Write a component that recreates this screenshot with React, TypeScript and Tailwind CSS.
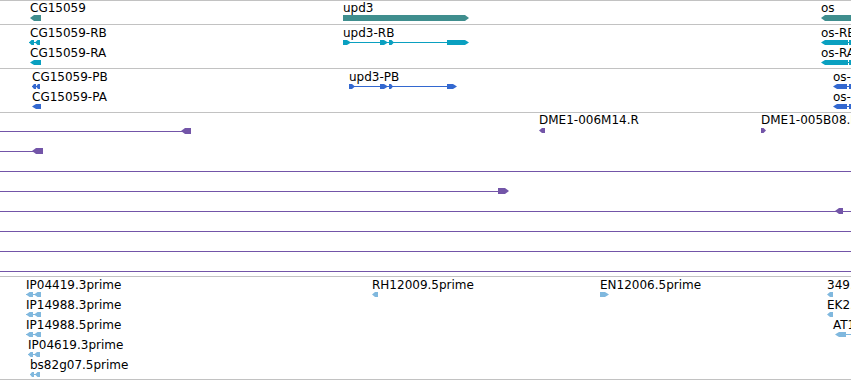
type Dir = 'L' | 'R';

// exon block with a pointed end showing strand
function Exon({ x1, x2, y, h, dir }: { x1: number; x2: number; y: number; h: number; dir?: Dir }) {
  const t = Math.min(4, (x2 - x1) / 2);
  const m = y + h / 2;
  let pts = `${x1},${y} ${x2},${y} ${x2},${y + h} ${x1},${y + h}`;
  if (dir === 'L') pts = `${x1},${m} ${x1 + t},${y} ${x2},${y} ${x2},${y + h} ${x1 + t},${y + h}`;
  if (dir === 'R') pts = `${x1},${y} ${x2 - t},${y} ${x2},${m} ${x2 - t},${y + h} ${x1},${y + h}`;
  return <polygon points={pts} />;
}

function Intron({ x1, x2, y }: { x1: number; x2: number; y: number }) {
  return <rect x={x1} y={y} width={x2 - x1} height={1} shapeRendering="crispEdges" />;
}

function Label({ text, pos }: { text: string; pos: string }) {
  return <span className={`absolute whitespace-nowrap ${pos}`}>{text}</span>;
}

function Track({
  className,
  top,
  height,
  fill,
  labels,
  children,
}: {
  className: string;
  top: number;
  height: number;
  fill: string;
  labels: { text: string; pos: string }[];
  children: React.ReactNode;
}) {
  return (
    <div className={`relative w-full overflow-hidden border-b border-[#c2c2c2] ${className}`}>
      <svg
        className="absolute left-0 top-0"
        width={851}
        height={height}
        viewBox={`0 ${top} 851 ${height}`}
        fill={fill}
      >
        {children}
      </svg>
      {labels.map((l) => (
        <Label key={l.text + l.pos} text={l.text} pos={l.pos} />
      ))}
    </div>
  );
}

const geneLabels = [
  { text: 'CG15059', pos: 'left-[30px] top-0' },
  { text: 'upd3', pos: 'left-[343px] top-0' },
  { text: 'os', pos: 'left-[821px] top-0' },
];

const transcriptLabels = [
  { text: 'CG15059-RB', pos: 'left-[30px] top-[1px]' },
  { text: 'CG15059-RA', pos: 'left-[30px] top-[21px]' },
  { text: 'upd3-RB', pos: 'left-[343px] top-[1px]' },
  { text: 'os-RB', pos: 'left-[821px] top-[1px]' },
  { text: 'os-RA', pos: 'left-[821px] top-[21px]' },
];

const proteinLabels = [
  { text: 'CG15059-PB', pos: 'left-[32px] top-[1px]' },
  { text: 'CG15059-PA', pos: 'left-[32px] top-[21px]' },
  { text: 'upd3-PB', pos: 'left-[349px] top-[1px]' },
  { text: 'os-PB', pos: 'left-[833px] top-[1px]' },
  { text: 'os-PA', pos: 'left-[833px] top-[21px]' },
];

const cloneLabels = [
  { text: 'DME1-006M14.R', pos: 'left-[539px] top-0' },
  { text: 'DME1-005B08.F', pos: 'left-[761px] top-0' },
];

const estLabels = [
  { text: 'IP04419.3prime', pos: 'left-[26px] top-[1px]' },
  { text: 'IP14988.3prime', pos: 'left-[26px] top-[21px]' },
  { text: 'IP14988.5prime', pos: 'left-[26px] top-[41px]' },
  { text: 'IP04619.3prime', pos: 'left-[28px] top-[61px]' },
  { text: 'bs82g07.5prime', pos: 'left-[30px] top-[81px]' },
  { text: 'RH12009.5prime', pos: 'left-[372px] top-[1px]' },
  { text: 'EN12006.5prime', pos: 'left-[600px] top-[1px]' },
  { text: '349.5prime', pos: 'left-[827px] top-[1px]' },
  { text: 'EK2.3prime', pos: 'left-[827px] top-[21px]' },
  { text: 'AT12.5prime', pos: 'left-[833px] top-[41px]' },
];

const fullLines = [171, 231, 251, 271];

export default function App() {
  return (
    <div className="w-[851px] h-[381px] overflow-hidden bg-white border-t border-[#c2c2c2] font-['DejaVu_Sans',sans-serif] text-[12px] leading-[14px] text-black">
      <Track className="h-[24px]" top={1} height={23} fill="#3f8e8e" labels={geneLabels}>
        <Exon x1={30} x2={41} y={15} h={6} dir="L" />
        <Exon x1={343} x2={469} y={15} h={6} dir="R" />
        <Exon x1={821} x2={860} y={15} h={6} dir="L" />
      </Track>

      <Track className="h-[44px]" top={25} height={43} fill="#0aa0c0" labels={transcriptLabels}>
        <Intron x1={29} x2={40} y={42} />
        <Exon x1={29} x2={34} y={40} h={5} dir="L" />
        <Exon x1={35} x2={40} y={40} h={5} dir="L" />
        <Exon x1={30} x2={41} y={60} h={5} dir="L" />
        <Intron x1={343} x2={468} y={42} />
        <Exon x1={343} x2={351} y={40} h={5} dir="R" />
        <Exon x1={380} x2={388} y={40} h={5} dir="R" />
        <Exon x1={389} x2={394} y={40} h={5} dir="R" />
        <Exon x1={447} x2={469} y={40} h={5} dir="R" />
        <Exon x1={821} x2={848} y={40} h={5} dir="L" />
        <Intron x1={848} x2={851} y={42} />
        <Exon x1={849} x2={860} y={40} h={5} />
        <Exon x1={821} x2={848} y={60} h={5} dir="L" />
        <Intron x1={848} x2={851} y={62} />
        <Exon x1={849} x2={860} y={60} h={5} />
      </Track>

      <Track className="h-[44px]" top={69} height={43} fill="#3368d0" labels={proteinLabels}>
        <Intron x1={32} x2={40} y={86} />
        <Exon x1={32} x2={36} y={84} h={5} dir="L" />
        <Exon x1={36} x2={40} y={84} h={5} dir="L" />
        <Exon x1={32} x2={41} y={104} h={5} dir="L" />
        <Intron x1={349} x2={456} y={86} />
        <Exon x1={349} x2={355} y={84} h={5} dir="R" />
        <Exon x1={380} x2={388} y={84} h={5} dir="R" />
        <Exon x1={389} x2={393} y={84} h={5} dir="R" />
        <Exon x1={447} x2={457} y={84} h={5} dir="R" />
        <Exon x1={833} x2={847} y={84} h={5} dir="L" />
        <Intron x1={847} x2={851} y={86} />
        <Exon x1={849} x2={860} y={84} h={5} />
        <Exon x1={833} x2={847} y={104} h={5} dir="L" />
        <Intron x1={847} x2={851} y={106} />
        <Exon x1={849} x2={860} y={104} h={5} />
      </Track>

      <Track className="h-[164px]" top={113} height={163} fill="#7355a8" labels={cloneLabels}>
        <Intron x1={0} x2={183} y={131} />
        <Exon x1={181} x2={191} y={128} h={6} dir="L" />
        <Exon x1={539} x2={545} y={128} h={5} dir="L" />
        <Exon x1={761} x2={766} y={128} h={5} dir="R" />
        <Intron x1={0} x2={34} y={151} />
        <Exon x1={32} x2={43} y={148} h={6} dir="L" />
        <Intron x1={0} x2={500} y={191} />
        <Exon x1={498} x2={509} y={188} h={6} dir="R" />
        <Intron x1={0} x2={851} y={211} />
        <Exon x1={835} x2={843} y={208} h={6} dir="L" />
        {fullLines.map((y) => (
          <Intron key={y} x1={0} x2={851} y={y} />
        ))}
      </Track>

      <Track className="h-[103px]" top={277} height={102} fill="#80b8de" labels={estLabels}>
        {[292, 312, 332].map((y) => (
          <g key={y}>
            <Intron x1={26} x2={41} y={y + 2} />
            <Exon x1={26} x2={33} y={y} h={5} dir="L" />
            <Exon x1={34} x2={41} y={y} h={5} dir="L" />
          </g>
        ))}
        <Intron x1={28} x2={40} y={354} />
        <Exon x1={28} x2={33} y={352} h={5} dir="L" />
        <Exon x1={34} x2={40} y={352} h={5} dir="L" />
        <Intron x1={30} x2={40} y={374} />
        <Exon x1={30} x2={34} y={372} h={5} dir="L" />
        <Exon x1={35} x2={40} y={372} h={5} dir="L" />
        <Exon x1={372} x2={378} y={292} h={5} dir="L" />
        <Exon x1={600} x2={609} y={292} h={5} dir="R" />
        <Exon x1={827} x2={833} y={292} h={5} dir="L" />
        <Exon x1={827} x2={833} y={312} h={5} dir="L" />
        <Exon x1={835} x2={846} y={332} h={5} dir="L" />
        <Intron x1={846} x2={851} y={334} />
      </Track>
    </div>
  );
}
